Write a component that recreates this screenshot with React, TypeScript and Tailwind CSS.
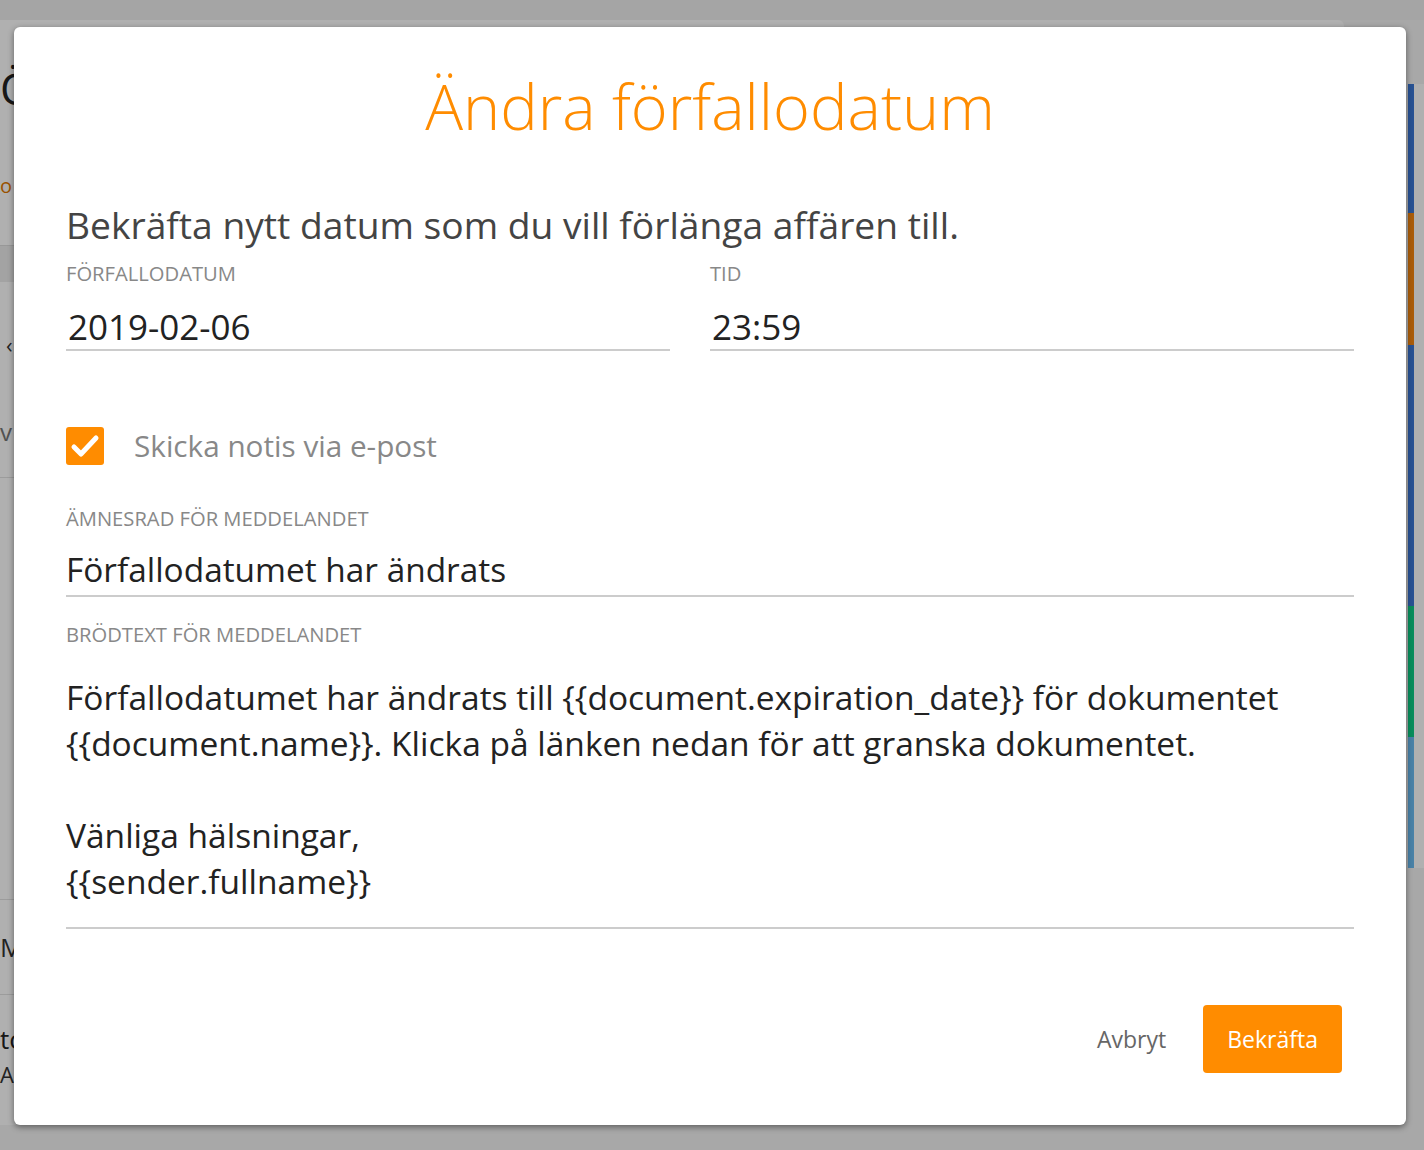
import React from "react";

const font = { fontFamily: '"Open Sans", "Noto Sans", sans-serif' };

function Field({ label, value, className = "" }: { label: string; value: string; className?: string }) {
  return (
    <div className={`flex flex-col ${className}`}>
      <div className="text-[20.2px] leading-[24px] text-[#888888] uppercase">{label}</div>
      <div className="mt-[20px] h-[46px] border-b-2 border-[#cccccc] text-[35px] leading-[44px] text-[#222222] pl-[2px]">
        {value}
      </div>
    </div>
  );
}

export default function App() {
  return (
    <div className="relative w-[1424px] h-[1150px] overflow-hidden bg-[#f4f4f4]" style={font}>
      {/* background application */}
      <div className="h-[20px] bg-[#efefef]" />
      <div className="flex h-[1130px]">
        <div className="w-[1344px] h-[1105px] bg-white rounded-tr-[6px] flex flex-col overflow-hidden">
          <div className="h-[225px] flex flex-col">
            <div className="mt-[42px] text-[44px] leading-[52px] text-[#222]">Ö</div>
            <div className="mt-[60px] text-[20px] leading-[24px] text-[#e07800]">o</div>
          </div>
          <div className="h-[37px] bg-[#ececec] border-t border-[#dddddd]" />
          <div className="h-[196px] flex flex-col border-b border-[#e2e2e2]">
            <div className="mt-[50px] ml-[6px] text-[22px] leading-[24px] text-[#333]">‹</div>
            <div className="mt-[62px] text-[24px] leading-[28px] text-[#777]">v</div>
          </div>
          <div className="h-[422px] border-b border-[#e2e2e2]" />
          <div className="h-[95px] flex items-center border-b border-[#e2e2e2]">
            <div className="text-[26px] leading-[30px] text-[#333]">M</div>
          </div>
          <div className="flex flex-col pt-[28px]">
            <div className="text-[26px] leading-[32px] text-[#222]">to</div>
            <div className="text-[22px] leading-[30px] text-[#333] mt-[4px]">Ac</div>
          </div>
        </div>
        <div className="w-[64px]" />
        <div className="w-[16px] flex flex-col pt-[64px]">
          <div className="h-[129px] border-l-[6px] border-[#3a77d6] bg-white" />
          <div className="h-[132px] border-l-[6px] border-[#f6870f] bg-white" />
          <div className="h-[261px] border-l-[6px] border-[#3a77d6] bg-white" />
          <div className="h-[131px] border-l-[6px] border-[#0bcc86] bg-white" />
          <div className="h-[131px] border-l-[6px] border-[#6bbdf2] bg-white" />
        </div>
      </div>

      {/* overlay */}
      <div className="absolute inset-0 bg-[rgba(0,0,0,0.31)]" />

      {/* modal */}
      <div className="absolute left-[14px] top-[27px] w-[1392px] h-[1098px] bg-white rounded-[6px] shadow-[0_2px_6px_rgba(0,0,0,0.45)] px-[52px] pt-[43px] flex flex-col">
        <h1 className="text-center text-[63px] leading-[72px] font-light text-[#ff8c00]">Ändra förfallodatum</h1>

        <p className="mt-[61px] text-[37.2px] leading-[44px] text-[#444444]">
          Bekräfta nytt datum som du vill förlänga affären till.
        </p>

        <div className="mt-[14px] grid grid-cols-[604px_1fr] gap-[40px]">
          <Field label="Förfallodatum" value="2019-02-06" />
          <Field label="Tid" value="23:59" />
        </div>

        <label className="mt-[76px] flex items-center h-[38px]">
          <span className="w-[38px] h-[38px] rounded-[3px] bg-[#ff8c00] flex items-center justify-center">
            <svg width="38" height="38" viewBox="0 0 38 38">
              <polyline points="8,20 15,27 30,11" fill="none" stroke="white" strokeWidth="5" strokeLinecap="round" strokeLinejoin="round" />
            </svg>
          </span>
          <span className="ml-[30px] text-[29.7px] leading-[38px] text-[#888888]">Skicka notis via e-post</span>
        </label>

        <div className="mt-[41px] text-[20.2px] leading-[24px] text-[#888888] uppercase">Ämnesrad för meddelandet</div>
        <div className="mt-[17px] h-[50px] border-b-2 border-[#cccccc] text-[33.4px] leading-[44px] text-[#222222]">
          Förfallodatumet har ändrats
        </div>

        <div className="mt-[25px] text-[20.2px] leading-[24px] text-[#888888] uppercase">Brödtext för meddelandet</div>
        <div className="mt-[28px] pb-[23px] border-b-2 border-[#cccccc] text-[33.5px] leading-[46px] text-[#222222]">
          <div>Förfallodatumet har ändrats till {"{{document.expiration_date}}"} för dokumentet</div>
          <div>{"{{document.name}}"}. Klicka på länken nedan för att granska dokumentet.</div>
          <div className="h-[46px]" />
          <div>Vänliga hälsningar,</div>
          <div>{"{{sender.fullname}}"}</div>
        </div>

        <div className="mt-[76px] flex justify-end items-center gap-[13px] pr-[12px]">
          <button className="h-[68px] px-6 text-[23px] text-[#666666] bg-transparent">Avbryt</button>
          <button className="h-[68px] px-6 text-[23px] text-white bg-[#ff8c00] rounded-[4px]">Bekräfta</button>
        </div>
      </div>
    </div>
  );
}
